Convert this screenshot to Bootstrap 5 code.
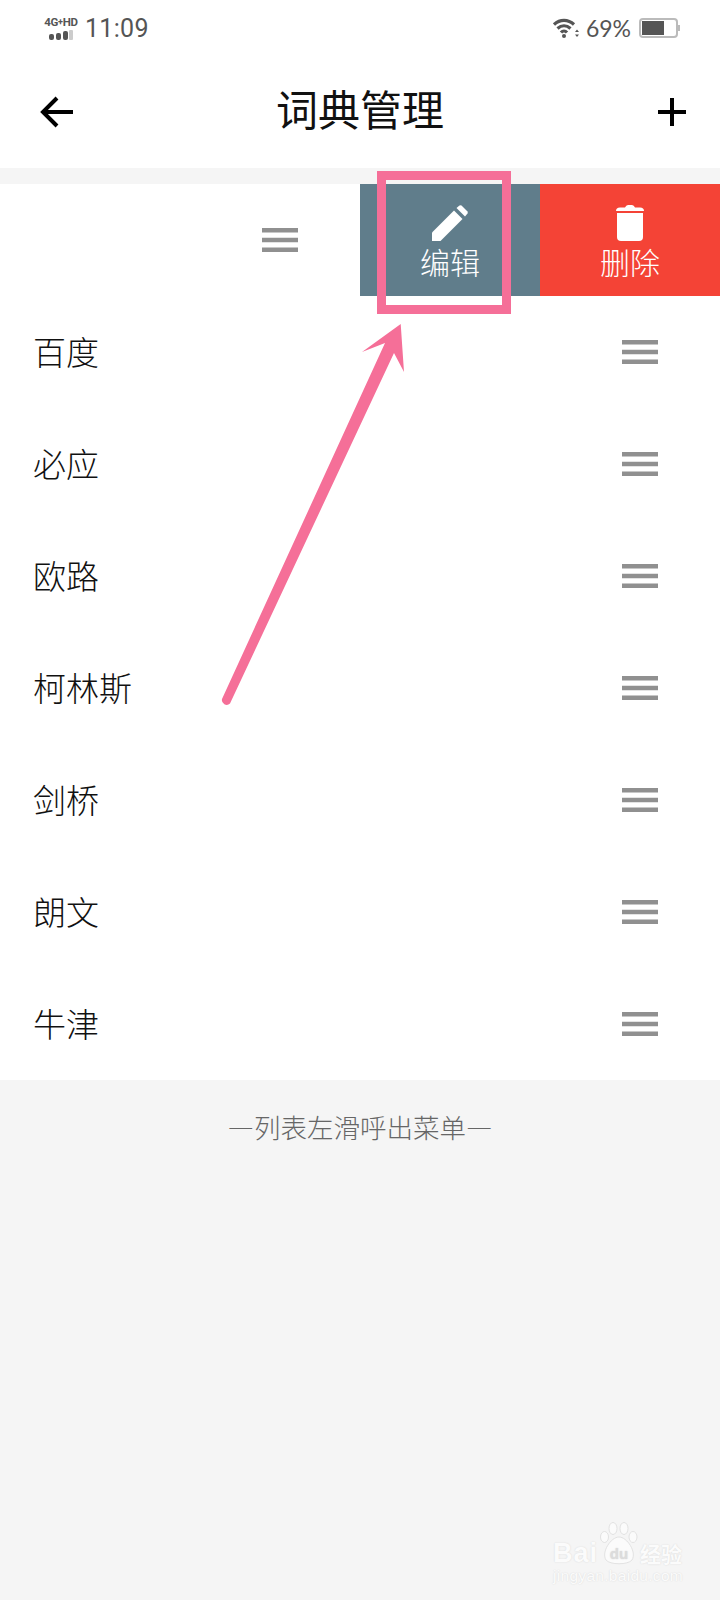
<!DOCTYPE html>
<html lang="zh-CN">
<head>
    <meta charset="UTF-8">
    <meta name="viewport" content="width=device-width, initial-scale=1.0">
    <title>词典管理</title>
    <link href="https://cdn.jsdelivr.net/npm/bootstrap@5.3.3/dist/css/bootstrap.min.css" rel="stylesheet">
    <style>
        html, body { height: 1600px; }
        body { background: #f5f5f5; font-family: "Noto Sans CJK SC", sans-serif; overflow: hidden; position: relative; }
        .status-bar { height: 56px; padding: 0 40px 0 42px; background: #fff; color: #555; }
        .net-type { width: 38px; }
        .net-label { font: 700 11.500px/10px "Roboto", sans-serif; white-space: nowrap; letter-spacing: -0.3px; margin-bottom: 3px; }
        .net-label sup { font-size: 9px; top: -1px; }
        .clock { font: 400 25px/1 "Roboto", sans-serif; margin-left: 5px; letter-spacing: .3px; }
        .batt-text { font: 400 23px/1 "Lato", sans-serif; margin: 0 8px 0 7px; }
        .title-bar { height: 112px; padding: 0 33px 0 40px; background: #fff; }
        .title-text { font-size: 42px; line-height: 1; color: #111; margin: 0 11px 8px 0; font-weight: 400; }
        .dict-list { margin-top: 16px; border-radius: 0; }
        .dict-list .dict-row { height: 112px; padding: 0 62px 0 33px; font-size: 33px; font-weight: 300; color: #111; border-width: 0; }
        .dict-list .swiped-row { padding: 0; justify-content: flex-start; overflow: hidden; }
        .swiped-spacer { width: 262px; }
        .swipe-btn { width: 180px; height: 112px; color: #fff; font-size: 30px; font-weight: 300; line-height: 30px; padding-top: 21px; gap: 5px; }
        .swipe-edit { background: #607d8b; margin-left: 62px; }
        .swipe-del { background: #f44336; }
        .foot-hint { margin-top: 29px; font-size: 26.500px; font-weight: 300; line-height: 36px; color: #666; }
        .mark-box { position: absolute; left: 377px; top: 171px; width: 134px; height: 143px; border: 9px solid #f56f98; }
        .mark-arrow { position: absolute; left: 0; top: 0; }
        .watermark { position: absolute; left: 553px; top: 1522px; width: 130px; color: #fbfbfb; text-shadow: 0 0 1.500px #d4d4d4; }
        .wm-top { font: 700 27px/24px "Liberation Sans", sans-serif; letter-spacing: 1px; }
        .wm-cn { font: 700 21px/24px "Noto Sans CJK SC", sans-serif; margin-left: 2px; }
        .wm-url { font: 400 15.500px/16px "Liberation Sans", sans-serif; letter-spacing: .3px; margin-top: 3px; white-space: nowrap; }
        .wm-paw { margin-left: 2px; }
        .wm-paw text { font: 700 15px "Liberation Sans", sans-serif; }
    </style>
</head>
<body>
    <div class="status-bar d-flex align-items-center justify-content-between">
        <div class="d-flex align-items-center">
            <div class="net-type d-flex flex-column align-items-center">
                <div class="net-label">4G<sup>+</sup>HD</div>
                <svg width="24" height="10" viewBox="0 0 24 10">
                    <rect x="0" y="4" width="5" height="6" rx="2" fill="#555"/>
                    <rect x="7" y="3" width="5" height="7" rx="2" fill="#555"/>
                    <rect x="14" y="1" width="5" height="9" rx="2" fill="#555"/>
                    <rect x="20" y="0" width="4" height="10" rx="1" fill="#ccc"/>
                </svg>
            </div>
            <span class="clock">11:09</span>
        </div>
        <div class="d-flex align-items-center">
            <svg width="26" height="20" viewBox="0 0 26 20" fill="none" stroke="#555" stroke-width="3.200">
                <path d="M1 6.500C7 1 15 1 21 6.500"/>
                <path d="M4.500 10.500C8.500 7 13.500 7 17.500 10.500"/>
                <path d="M8 14.500C9.800 12.500 12.200 12.500 14 14.500"/>
                <circle cx="11" cy="18" r="2" fill="#555" stroke="none"/>
                <path d="M24 11.500l-2 2.500h4zM24 19l-2-2.500h4z" fill="#555" stroke="none"/>
            </svg>
            <span class="batt-text">69%</span>
            <svg width="41" height="20" viewBox="0 0 41 20">
                <rect x="1" y="1" width="37" height="18" rx="3" fill="none" stroke="#bbb" stroke-width="2"/>
                <rect x="3" y="3" width="22" height="14" fill="#555"/>
                <rect x="39" y="7" width="2" height="6" fill="#bbb"/>
            </svg>
        </div>
    </div>

    <div class="title-bar d-flex align-items-center justify-content-between">
        <svg width="34" height="32" viewBox="0 0 34 32" fill="none" stroke="#000" stroke-width="4">
            <path d="M17 2L3 16L17 30M3 16H33"/>
        </svg>
        <h1 class="title-text">词典管理</h1>
        <svg width="30" height="30" viewBox="0 0 30 30" fill="none" stroke="#000" stroke-width="4">
            <path d="M15 1V29M1 15H29"/>
        </svg>
    </div>

    <div class="list-group list-group-flush dict-list">
        <div class="list-group-item dict-row swiped-row d-flex align-items-center">
            <div class="swiped-spacer"></div>
            <svg width="36" height="24" viewBox="0 0 36 24" fill="#909090"><rect width="36" height="4.500"/><rect y="9.750" width="36" height="4.500"/><rect y="19.500" width="36" height="4.500"/></svg>
            <div class="swipe-btn swipe-edit d-flex flex-column align-items-center">
                <svg width="36" height="36" viewBox="0 0 36 36" fill="#fff">
                    <path d="M0 36V27.500L22 5.500L30.500 14L8.500 36Z"/>
                    <path d="M24.500 3L27.500 0.500Q28.500 0 29.500 0.500L35.500 6.500Q36 7.500 35.500 8.500L33 11.500Z"/>
                </svg>
                <span>编辑</span>
            </div>
            <div class="swipe-btn swipe-del d-flex flex-column align-items-center">
                <svg width="30" height="36" viewBox="0 0 30 36" fill="#fff">
                    <path d="M1 6Q1 2.500 5 2.500H10Q11 0 13 0H17Q19 0 20 2.500H25Q29 2.500 29 6Z"/>
                    <path d="M2 8H28V32Q28 36 24 36H6Q2 36 2 32Z"/>
                </svg>
                <span>删除</span>
            </div>
        </div>
        <div class="list-group-item dict-row d-flex align-items-center justify-content-between">百度
            <svg width="36" height="24" viewBox="0 0 36 24" fill="#909090"><rect width="36" height="4.500"/><rect y="9.750" width="36" height="4.500"/><rect y="19.500" width="36" height="4.500"/></svg>
        </div>
        <div class="list-group-item dict-row d-flex align-items-center justify-content-between">必应
            <svg width="36" height="24" viewBox="0 0 36 24" fill="#909090"><rect width="36" height="4.500"/><rect y="9.750" width="36" height="4.500"/><rect y="19.500" width="36" height="4.500"/></svg>
        </div>
        <div class="list-group-item dict-row d-flex align-items-center justify-content-between">欧路
            <svg width="36" height="24" viewBox="0 0 36 24" fill="#909090"><rect width="36" height="4.500"/><rect y="9.750" width="36" height="4.500"/><rect y="19.500" width="36" height="4.500"/></svg>
        </div>
        <div class="list-group-item dict-row d-flex align-items-center justify-content-between">柯林斯
            <svg width="36" height="24" viewBox="0 0 36 24" fill="#909090"><rect width="36" height="4.500"/><rect y="9.750" width="36" height="4.500"/><rect y="19.500" width="36" height="4.500"/></svg>
        </div>
        <div class="list-group-item dict-row d-flex align-items-center justify-content-between">剑桥
            <svg width="36" height="24" viewBox="0 0 36 24" fill="#909090"><rect width="36" height="4.500"/><rect y="9.750" width="36" height="4.500"/><rect y="19.500" width="36" height="4.500"/></svg>
        </div>
        <div class="list-group-item dict-row d-flex align-items-center justify-content-between">朗文
            <svg width="36" height="24" viewBox="0 0 36 24" fill="#909090"><rect width="36" height="4.500"/><rect y="9.750" width="36" height="4.500"/><rect y="19.500" width="36" height="4.500"/></svg>
        </div>
        <div class="list-group-item dict-row d-flex align-items-center justify-content-between">牛津
            <svg width="36" height="24" viewBox="0 0 36 24" fill="#909090"><rect width="36" height="4.500"/><rect y="9.750" width="36" height="4.500"/><rect y="19.500" width="36" height="4.500"/></svg>
        </div>
    </div>

    <div class="foot-hint text-center">—列表左滑呼出菜单—</div>

    <!-- annotation drawn on top of the screenshot -->
    <div class="mark-box"></div>
    <svg class="mark-arrow" width="720" height="800" viewBox="0 0 720 800">
        <path d="M400.700 324L362 352L385 343L222 699A4.800 4.800 0 0 0 230 703.500L394 353L404 372Z" fill="#f56f98"/>
    </svg>

    <div class="watermark">
        <div class="d-flex align-items-end">
            <span class="wm-top">Bai</span>
            <svg class="wm-paw" width="38" height="43" viewBox="0 0 38 43" fill="#fbfbfb" stroke="#dcdcdc" stroke-width="0.800">
                <ellipse cx="4.500" cy="15" rx="4" ry="5.500"/>
                <ellipse cx="13" cy="6.500" rx="4" ry="6"/>
                <ellipse cx="24" cy="6.500" rx="4" ry="6"/>
                <ellipse cx="33" cy="15" rx="4" ry="5.500"/>
                <path d="M19 15C27 15 37 30 32 38C28 43 10 43 6 38C1 30 11 15 19 15Z"/>
                <text x="19" y="37" text-anchor="middle" fill="#dcdcdc" stroke="none">du</text>
            </svg>
            <span class="wm-cn">经验</span>
        </div>
        <div class="wm-url">jingyan.baidu.com</div>
    </div>

    <script src="https://cdn.jsdelivr.net/npm/bootstrap@5.3.3/dist/js/bootstrap.bundle.min.js"></script>
</body>
</html>
